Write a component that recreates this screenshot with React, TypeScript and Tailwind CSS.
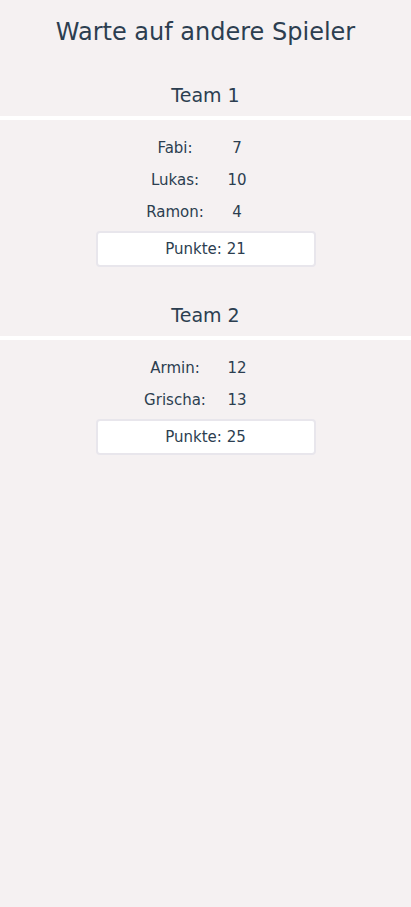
import React from "react";

type Team = { name: string; players: { name: string; score: number }[] };

const teams: Team[] = [
  { name: "Team 1", players: [{ name: "Fabi", score: 7 }, { name: "Lukas", score: 10 }, { name: "Ramon", score: 4 }] },
  { name: "Team 2", players: [{ name: "Armin", score: 12 }, { name: "Grischa", score: 13 }] },
];

export default function App() {
  return (
    <div
      className="min-h-[907px] w-full bg-[#f5f1f2] text-[#2c3e50]"
      style={{ fontFamily: '"DejaVu Sans", "Open Sans", sans-serif' }}
    >
      <h1 className="pt-[17px] text-center text-[24px] leading-[30px] font-normal">Warte auf andere Spieler</h1>
      <div className="mt-[36px]">
        {teams.map((t, i) => (
          <div key={t.name} className={i > 0 ? "mt-[36px]" : ""}>
            <h2 className="text-center text-[19px] leading-[24px]">{t.name}</h2>
            <div className="mt-[9px] h-[4px] bg-white" />
            <div className="mt-[12px] flex flex-col items-center">
              {t.players.map((p) => (
                <div key={p.name} className="flex h-[32px] items-center text-[15px]">
                  <span className="w-[63px] text-center">{p.name}:</span>
                  <span className="w-[61px] text-center">{p.score}</span>
                </div>
              ))}
              <div className="mt-[3px] flex h-[36px] w-[220px] items-center justify-center rounded-[4px] border-2 border-[#e8e6ec] bg-white text-[15px]">
                Punkte: {t.players.reduce((a, b) => a + b.score, 0)}
              </div>
            </div>
          </div>
        ))}
      </div>
    </div>
  );
}
